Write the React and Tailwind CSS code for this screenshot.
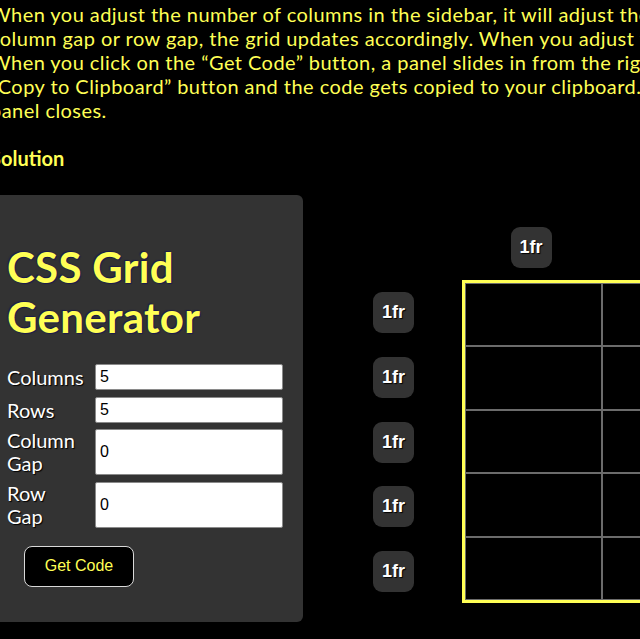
const lines = [
  "When you adjust the number of columns in the sidebar, it will adjust the number of columns in the grid. When you adjust the",
  "column gap or row gap, the grid updates accordingly. When you adjust the size of a row or column, the grid resizes.",
  "When you click on the “Get Code” button, a panel slides in from the right with the generated code and a",
  "“Copy to Clipboard” button and the code gets copied to your clipboard. When you click outside, the",
  "panel closes.",
];

const fields = [
  { label: ["Columns"], value: "5", tall: false },
  { label: ["Rows"], value: "5", tall: false },
  { label: ["Column", "Gap"], value: "0", tall: true },
  { label: ["Row", "Gap"], value: "0", tall: true },
];

const Badge = () => (
  <div className="flex h-[41px] w-[41px] items-center justify-center rounded-[9px] bg-[#333333] font-['Liberation_Sans',Arial,sans-serif] text-[18px] font-bold text-white [text-shadow:1px_1px_1px_#000]">
    1fr
  </div>
);

const Panel = () => (
  <div className="w-[313px] shrink-0 rounded-[6px] bg-[#333333] pl-[17px] pr-[20px] pt-[47px] pb-[35px]">
    <h1 className="text-[42px] font-bold leading-[50px] tracking-[0.3px] text-[#ffff55] [text-shadow:1px_1px_1px_#1a1a4d,-1px_-1px_1px_#1a1a4d]">
      CSS Grid
      <br />
      Generator
    </h1>
    <div className="mt-[22px] grid grid-cols-[84px_1fr] items-center gap-x-[4px] gap-y-[6.5px]">
      {fields.map((f) => (
        <div key={f.label.join(" ")} className="contents">
          <label
            className={`text-[20px] text-white [text-shadow:1px_1px_1px_#000] ${f.tall ? "leading-[23px]" : "leading-[24px]"}`}
          >
            {f.label.map((t) => (
              <div key={t}>{t}</div>
            ))}
          </label>
          <input
            readOnly
            value={f.value}
            className={`w-full rounded-[2px] border border-[#8a8a8a] bg-white px-[4px] font-['Liberation_Sans',Arial,sans-serif] text-[16px] text-black outline-none ${f.tall ? "h-[46px]" : "h-[26px]"}`}
          />
        </div>
      ))}
    </div>
    <button className="ml-[17px] mt-[18px] h-[41px] w-[110px] rounded-[8px] border-[1.5px] border-[#d9d9d9] bg-black font-['Liberation_Sans',Arial,sans-serif] text-[16px] text-[#ffff55]">
      Get Code
    </button>
  </div>
);

const GridArea = () => (
  <div className="ml-[70px] mt-[32px] grid grid-cols-[41px_auto] grid-rows-[41px_auto] gap-x-[48px] gap-y-[12px]">
    <div />
    <div className="grid grid-cols-[repeat(5,137px)] pl-[3px]">
      {[0, 1, 2, 3, 4].map((i) => (
        <div key={i} className="flex justify-center pr-[5px]">
          <Badge />
        </div>
      ))}
    </div>
    <div className="flex flex-col gap-[23.75px] pt-[12px]">
      {[0, 1, 2, 3, 4].map((i) => (
        <Badge key={i} />
      ))}
    </div>
    <div className="grid h-[323px] w-[691px] grid-cols-[repeat(5,137px)] grid-rows-5 border-[3px] border-[#ffff55]">
      {Array.from({ length: 25 }).map((_, i) => (
        <div key={i} className="border border-[#6b6b6b]" />
      ))}
    </div>
  </div>
);

export default function App() {
  return (
    <div className="min-h-[639px] w-full overflow-hidden bg-black font-['Lato','Open_Sans',sans-serif]">
      <div className="-ml-[10px] w-[1400px]">
        <div className="whitespace-nowrap pt-[2px] text-[20px] leading-[24px] tracking-[0.45px] text-[#ffff55]">
          {lines.map((l) => (
            <div key={l}>{l}</div>
          ))}
        </div>
        <h2 className="mt-[23px] text-[20px] font-bold leading-[26px] text-[#ffff55]">Solution</h2>
        <div className="mt-[24px] flex items-start">
          <Panel />
          <GridArea />
        </div>
      </div>
    </div>
  );
}
